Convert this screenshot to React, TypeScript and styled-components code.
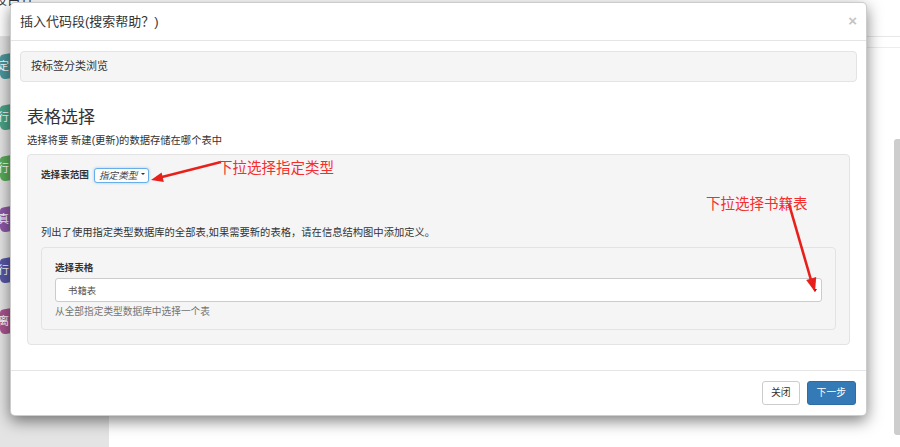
import React from 'react';
import styled, { createGlobalStyle } from 'styled-components';

const GlobalStyle = createGlobalStyle`
	html, body {
		margin: 0;
		padding: 0;
		background: #fff;
	}
	body {
		font-family: 'Helvetica Neue', 'Liberation Sans', 'Noto Sans CJK SC', sans-serif;
		color: #333;
	}
	* {
		box-sizing: border-box;
	}
`;

const Page = styled.div`
	position: relative;
	width: 900px;
	height: 447px;
	overflow: hidden;
	display: flex;
	flex-direction: column;
	background: #fff;
`;

const TopBar = styled.div`
	height: 37px;
	flex: none;
	border-bottom: 1px solid #e7e7e7;
	overflow: hidden;
`;

const Brand = styled.div`
	margin: -8px 0 0 -7px;
	font-size: 14px;
	line-height: 14px;
	color: #333;
`;

const Main = styled.div`
	flex: 1;
	display: flex;
	min-height: 0;
`;

const Sidebar = styled.div`
	width: 109px;
	flex: none;
	background: #e4e4e4;
	padding-top: 15px;
	display: flex;
	flex-direction: column;
	gap: 26px;
`;

const Tab = styled.div<{ $color: string }>`
	width: 34px;
	height: 25px;
	margin-left: 0;
	background: ${({ $color }) => $color};
	border-radius: 3px 2px 2px 6px;
	transform: skewY(-10deg);
	color: #fff;
	font-size: 11px;
	line-height: 25px;
	text-indent: -1px;

	span {
		display: inline-block;
		transform: skewY(10deg);
	}
`;

const Content = styled.div`
	flex: 1;
	display: flex;
	flex-direction: column;
`;

const SubBar = styled.div`
	height: 11px;
	flex: none;
	border-bottom: 1px solid #ececec;
`;

const ContentBody = styled.div`
	flex: 1;
	display: flex;
	justify-content: flex-end;
	padding: 91px 0 12px;
`;

const ScrollThumb = styled.div`
	width: 6px;
	background: #cdcdcd;
	border-radius: 3px 0 0 3px;
`;

const Modal = styled.div`
	position: absolute;
	left: 10px;
	top: 2px;
	width: 857px;
	height: 414px;
	background: #fff;
	border: 1px solid rgba(0, 0, 0, 0.2);
	border-radius: 5px;
	box-shadow: 0 5px 15px rgba(0, 0, 0, 0.5);
	display: flex;
	flex-direction: column;
`;

const Header = styled.div`
	height: 38px;
	flex: none;
	display: flex;
	align-items: center;
	justify-content: space-between;
	padding: 0 9px 0 9px;
	border-bottom: 1px solid #e5e5e5;
`;

const Title = styled.div`
	font-size: 13px;
	line-height: 18px;
	color: #333;
`;

const Close = styled.div`
	font-size: 15px;
	font-weight: bold;
	color: #c4c4c4;
	line-height: 15px;
	margin-top: -3px;
	font-family: 'Liberation Sans', sans-serif;
`;

const Body = styled.div`
	flex: 1;
	padding: 10px 9px 0;
	display: flex;
	flex-direction: column;
`;

const BrowsePanel = styled.div`
	height: 31px;
	background: #f5f5f5;
	border: 1px solid #e3e3e3;
	border-radius: 4px;
	padding: 0 10px;
	font-size: 11px;
	line-height: 29px;
`;

const Section = styled.div`
	padding: 0 7px;
	margin-top: 26px;
`;

const Heading = styled.div`
	font-size: 17px;
	line-height: 20px;
`;

const Lead = styled.div`
	font-size: 10.3px;
	line-height: 14px;
	margin-top: 6px;
`;

const Well = styled.div<{ $inner?: boolean }>`
	background: #f5f5f5;
	border: 1px solid #e3e3e3;
	border-radius: 4px;
	padding: ${({ $inner }) => ($inner ? '13px 13px 10px' : '13px 13px 14px')};
	margin-top: ${({ $inner }) => ($inner ? '7px' : '6px')};
`;

const InlineRow = styled.div`
	display: flex;
	align-items: center;
	gap: 5px;
	height: 14px;
`;

const Label = styled.div`
	font-size: 9.6px;
	line-height: 14px;
	font-weight: bold;
	white-space: nowrap;
`;

const MiniSelect = styled.div`
	width: 55px;
	height: 15px;
	flex: none;
	border: 1px solid #66afe9;
	border-radius: 3px;
	box-shadow: 0 0 3px rgba(102, 175, 233, 0.6);
	background: #fdfdfd;
	display: flex;
	align-items: center;
	padding: 0 0 0 4px;
	font-size: 9.6px;
	line-height: 13px;
	font-style: italic;
	color: #444;
	gap: 4px;
	white-space: nowrap;
	overflow: hidden;
`;

const Caret = styled.span<{ $size?: number; $lift?: number }>`
	display: inline-block;
	flex: none;
	margin-top: ${({ $lift = 0 }) => -$lift}px;
	border-left: ${({ $size = 2.5 }) => $size}px solid transparent;
	border-right: ${({ $size = 2.5 }) => $size}px solid transparent;
	border-top: ${({ $size = 2.5 }) => $size * 1.4}px solid #333;
`;

const Note = styled.div`
	font-size: 10.3px;
	line-height: 14px;
	margin-top: 44px;
`;

const FieldLabel = styled(Label)`
	margin-bottom: 3px;
`;

const Select = styled.div`
	height: 24px;
	background: #fff;
	border: 1px solid #ccc;
	border-radius: 3px;
	display: flex;
	align-items: center;
	justify-content: space-between;
	padding: 0 4px 0 12px;
	font-size: 9.4px;
	color: #555;
`;

const Help = styled.div`
	font-size: 9.7px;
	line-height: 14px;
	color: #737373;
	margin-top: 3px;
`;

const Footer = styled.div`
	height: 45px;
	flex: none;
	border-top: 1px solid #e5e5e5;
	display: flex;
	justify-content: flex-end;
	align-items: center;
	gap: 7px;
	padding: 0 10px 0 0;
`;

const Button = styled.div<{ $primary?: boolean }>`
	height: 24px;
	padding: 0 ${({ $primary }) => ($primary ? '9px' : '8px')};
	border-radius: 3px;
	border: 1px solid ${({ $primary }) => ($primary ? '#2e6da4' : '#ccc')};
	background: ${({ $primary }) => ($primary ? '#337ab7' : '#fff')};
	color: ${({ $primary }) => ($primary ? '#fff' : '#333')};
	font-size: 9.8px;
	line-height: 22px;
`;

const Annotation = styled.div<{ $x: number; $y: number }>`
	position: absolute;
	left: ${({ $x }) => $x}px;
	top: ${({ $y }) => $y}px;
	font-family: 'Noto Sans CJK SC', sans-serif;
	font-size: 14.5px;
	line-height: 16px;
	color: #f52d2d;
	white-space: nowrap;
`;

const Overlay = styled.svg`
	position: absolute;
	left: 0;
	top: 0;
	pointer-events: none;
`;

const tabs = [
	{ c: '#4b979c', t: '定' },
	{ c: '#4aa287', t: '行' },
	{ c: '#5aab5a', t: '行' },
	{ c: '#8d58a6', t: '真' },
	{ c: '#5856a6', t: '行' },
	{ c: '#a8548e', t: '离' },
];

const App: React.FC = () => (
	<>
		<GlobalStyle />
		<Page>
			<TopBar>
				<Brand>段目往</Brand>
			</TopBar>
			<Main>
				<Sidebar>
					{tabs.map((tab, i) => (
						<Tab key={i} $color={tab.c}>
							<span>{tab.t}</span>
						</Tab>
					))}
				</Sidebar>
				<Content>
					<SubBar />
					<ContentBody>
						<ScrollThumb />
					</ContentBody>
				</Content>
			</Main>

			<Modal>
				<Header>
					<Title>插入代码段(搜索帮助？)</Title>
					<Close>×</Close>
				</Header>
				<Body>
					<BrowsePanel>按标签分类浏览</BrowsePanel>
					<Section>
						<Heading>表格选择</Heading>
						<Lead>选择将要 新建(更新)的数据存储在哪个表中</Lead>
						<Well>
							<InlineRow>
								<Label>选择表范围</Label>
								<MiniSelect>
									指定类型
									<Caret $size={2} $lift={3} />
								</MiniSelect>
							</InlineRow>
							<Note>列出了使用指定类型数据库的全部表,如果需要新的表格，请在信息结构图中添加定义。</Note>
							<Well $inner>
								<FieldLabel>选择表格</FieldLabel>
								<Select>
									书籍表
									<Caret $size={2.5} />
								</Select>
								<Help>从全部指定类型数据库中选择一个表</Help>
							</Well>
						</Well>
					</Section>
				</Body>
				<Footer>
					<Button>关闭</Button>
					<Button $primary>下一步</Button>
				</Footer>
			</Modal>

			<Overlay width="900" height="447" viewBox="0 0 900 447">
				<line x1="221" y1="162" x2="160" y2="177.5" stroke="#e8201c" strokeWidth="2.4" />
				<polygon points="151,180 163.8,182 161.6,172.6" fill="#e8201c" />
				<line x1="789" y1="204" x2="811" y2="280" stroke="#e8201c" strokeWidth="2.6" />
				<polygon points="815,292 816.2,277 806.2,280" fill="#e8201c" />
			</Overlay>
			<Annotation $x={218} $y={159}>下拉选择指定类型</Annotation>
			<Annotation $x={706} $y={195}>下拉选择书籍表</Annotation>
		</Page>
	</>
);

export default App;
